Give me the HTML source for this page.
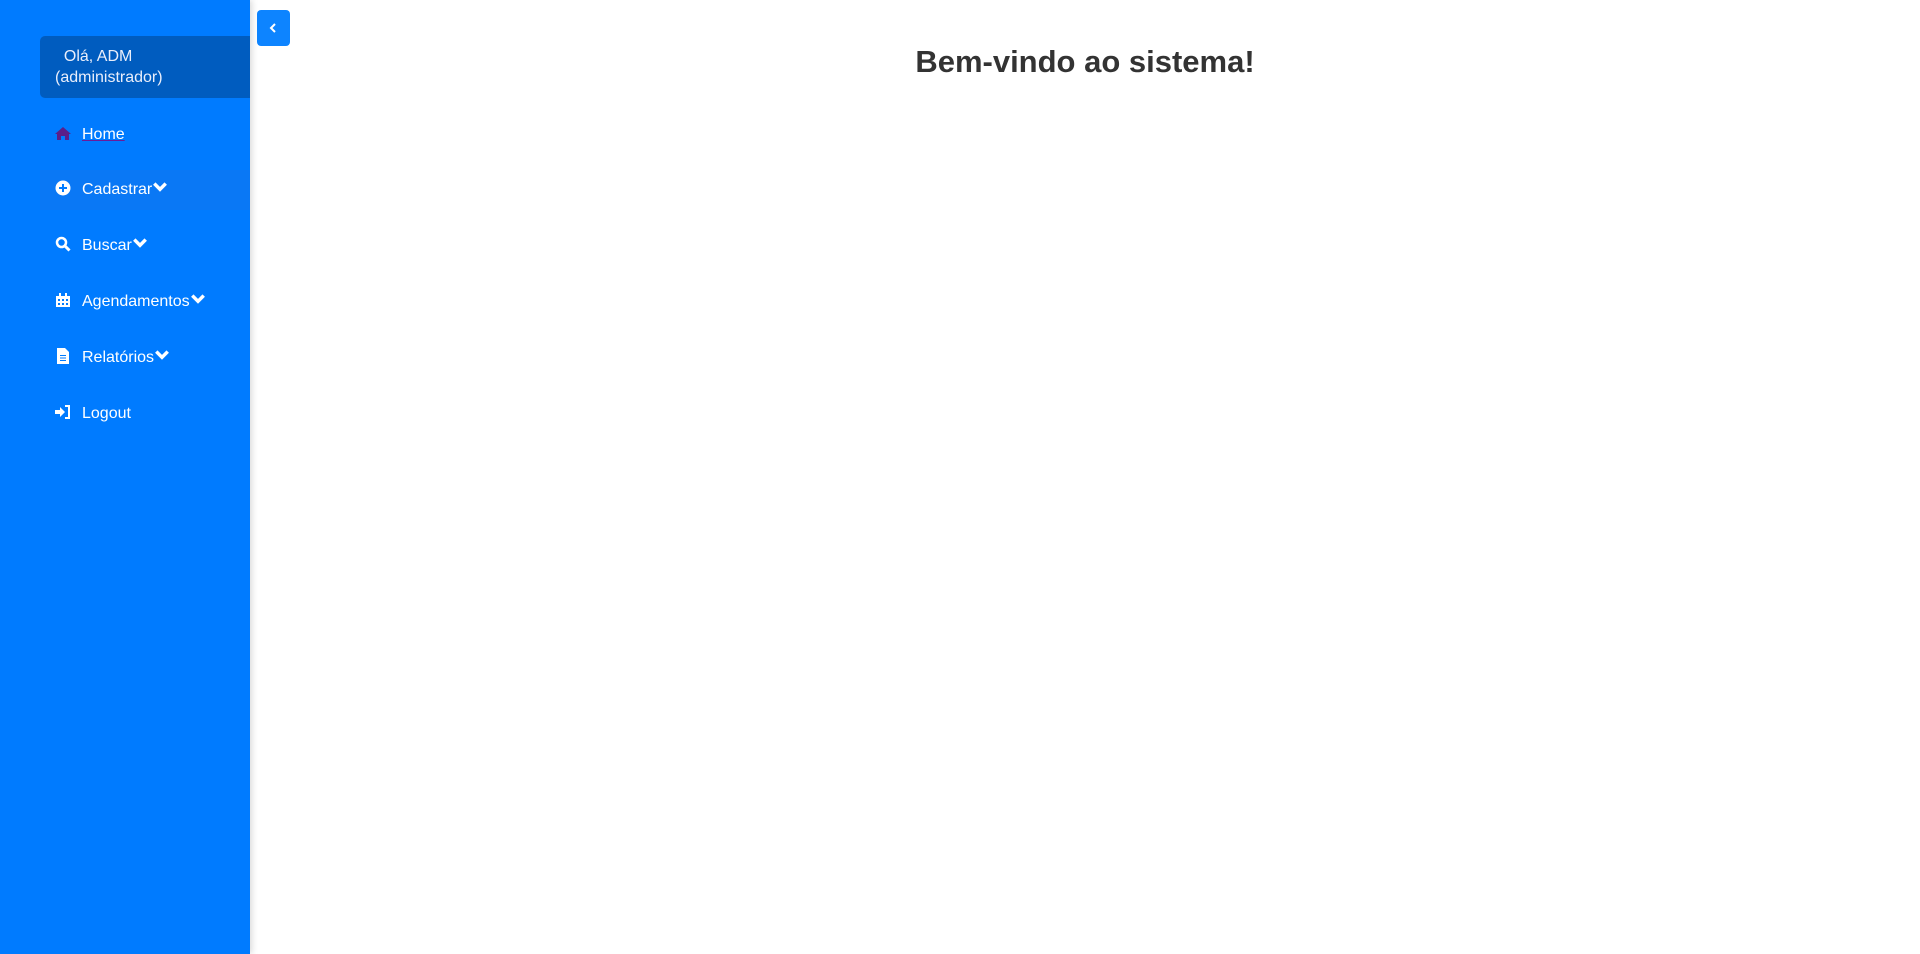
<!DOCTYPE html>
<html><head><meta charset="utf-8"><style>
*{margin:0;padding:0;box-sizing:border-box}
body{width:1920px;height:954px;overflow:hidden;background:#fff;font-family:"Liberation Sans",sans-serif;position:relative}
.sb{position:absolute;left:0;top:0;width:250px;height:954px;background:#007bff;box-shadow:2px 0 6px rgba(0,0,0,.15)}
.user{position:absolute;left:40px;top:36px;width:210px;height:62px;background:#005cbf;border-radius:5px 0 0 5px;color:#e9eefb;font-size:16px;line-height:21px;padding:10px 0 0 15px}
.item{position:absolute;left:40px;width:210px;height:40px;color:#fff;font-size:16px;display:flex;align-items:center;padding-left:15px}
.item svg{width:16px;height:16px;margin:0 11px 4px 0;fill:#fff}
.item .ch{width:16px;height:16px;margin:0 0 6px 0;fill:none;stroke:#fff;stroke-width:3}
.btn{position:absolute;left:257px;top:10px;width:33px;height:36px;background:#0d84ff;border-radius:4px}
h1{position:absolute;left:250px;right:0;top:44px;text-align:center;font-size:31px;font-weight:bold;color:#333}
</style></head><body>
<div class="sb">
<div class="user">&nbsp;&nbsp;Olá, ADM<br>(administrador)</div>
<div class="item" style="top:115px"><svg viewBox="0 0 16 16" style="fill:#5b1f8a"><path d="M8 2L0 9h2v6h4v-4h4v4h4V9h2z"/></svg><span style="text-decoration:underline;text-decoration-color:#6a1b9a">Home</span></div>
<div class="item" style="top:170px;background:#0a78f5"><svg viewBox="0 0 16 16"><circle cx="8" cy="8" r="7.5"/><path d="M7 4h2v3h3v2H9v3H7V9H4V7h3z" fill="#007bff"/></svg>Cadastrar<svg class="ch" viewBox="0 0 14 14"><path d="M2 4l5 5 5-5"/></svg></div>
<div class="item" style="top:226px"><svg viewBox="0 0 16 16"><circle cx="6.5" cy="6.5" r="4.5" fill="none" stroke="#fff" stroke-width="2.5"/><path d="M9.5 9.5l5 5" stroke="#fff" stroke-width="3"/></svg>Buscar<svg class="ch" viewBox="0 0 14 14"><path d="M2 4l5 5 5-5"/></svg></div>
<div class="item" style="top:282px"><svg viewBox="0 0 16 16"><path d="M1 4h14v11H1z"/><path d="M4 1h2v3H4zM10 1h2v3h-2z"/><path d="M3 7h2v2H3zM7 7h2v2H7zM11 7h2v2h-2zM3 11h2v2H3zM7 11h2v2H7zM11 11h2v2h-2z" fill="#007bff"/></svg>Agendamentos<svg class="ch" viewBox="0 0 14 14"><path d="M2 4l5 5 5-5"/></svg></div>
<div class="item" style="top:338px"><svg viewBox="0 0 16 16"><path d="M2 0h8l4 4v12H2z"/><path d="M5 7h6v1H5zM5 9.5h6v1H5zM5 12h6v1H5z" fill="#007bff"/></svg>Relatórios<svg class="ch" viewBox="0 0 14 14"><path d="M2 4l5 5 5-5"/></svg></div>
<div class="item" style="top:394px"><svg viewBox="0 0 16 16"><path d="M0 6h5V3l5 5-5 5v-3H0z"/><path d="M10 2h4v12h-4" fill="none" stroke="#fff" stroke-width="2"/></svg>Logout</div>
</div>
<div class="btn"><svg viewBox="0 0 33 36" width="33" height="36"><path d="M18 22l-4-4 4-4" fill="none" stroke="#fff" stroke-width="2"/></svg></div>
<h1>Bem-vindo ao sistema!</h1>
</body></html>
